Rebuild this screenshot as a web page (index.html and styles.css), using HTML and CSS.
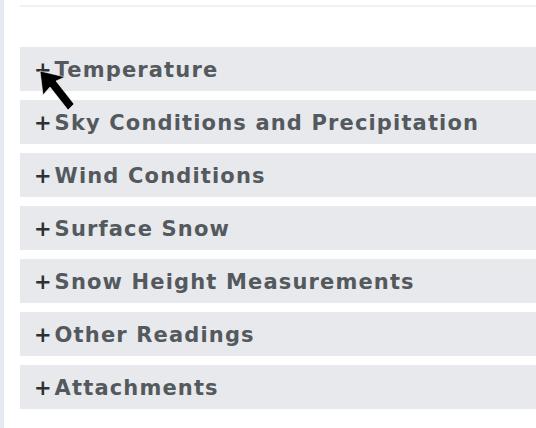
FILE: index.html
```html
<!DOCTYPE html>
<html>
<head>
<meta charset="utf-8">
<link rel="stylesheet" href="styles.css">
</head>
<body>
<div class="page">
  <div class="strip"></div>
  <div class="content">
    <div class="topline"></div>
    <div class="sections">
      <div class="section"><span class="plus">+</span><span class="title">Temperature</span></div>
      <div class="section"><span class="plus">+</span><span class="title">Sky Conditions and Precipitation</span></div>
      <div class="section"><span class="plus">+</span><span class="title">Wind Conditions</span></div>
      <div class="section"><span class="plus">+</span><span class="title">Surface Snow</span></div>
      <div class="section"><span class="plus">+</span><span class="title">Snow Height Measurements</span></div>
      <div class="section"><span class="plus">+</span><span class="title">Other Readings</span></div>
      <div class="section"><span class="plus">+</span><span class="title">Attachments</span></div>
    </div>
  </div>
  <svg class="cursor" width="44" height="48" viewBox="0 0 44 48">
    <polygon points="2,1 5,25 12,17 30,40 36,34 18,11 27,7" fill="#000" stroke="rgba(255,255,255,0.6)" stroke-width="1"/>
  </svg>
</div>
</body>
</html>
```
FILE: styles.css
```css
html, body {
  margin: 0;
  padding: 0;
  background: #fff;
}
.page {
  position: relative;
  display: flex;
  width: 536px;
  height: 428px;
  overflow: hidden;
  font-family: "DejaVu Sans", Verdana, sans-serif;
}
.strip {
  width: 4px;
  flex: none;
  background: #e5eaf2;
}
.content {
  flex: 1;
  padding-left: 16px;
  padding-top: 5px;
}
.topline {
  height: 2px;
  background: #eef2f8;
}
.sections {
  margin-top: 40px;
  display: flex;
  flex-direction: column;
  gap: 9px;
}
.section {
  height: 44px;
  background: #e7e9ed;
  display: flex;
  align-items: center;
  padding-left: 14px;
  padding-top: 2px;
  box-sizing: border-box;
  font-weight: bold;
  font-size: 21px;
}
.plus {
  color: #2e3033;
  margin-right: 3px;
}
.title {
  color: #54595e;
  letter-spacing: 1.15px;
}
.cursor {
  position: absolute;
  left: 38px;
  top: 70px;
}
```
